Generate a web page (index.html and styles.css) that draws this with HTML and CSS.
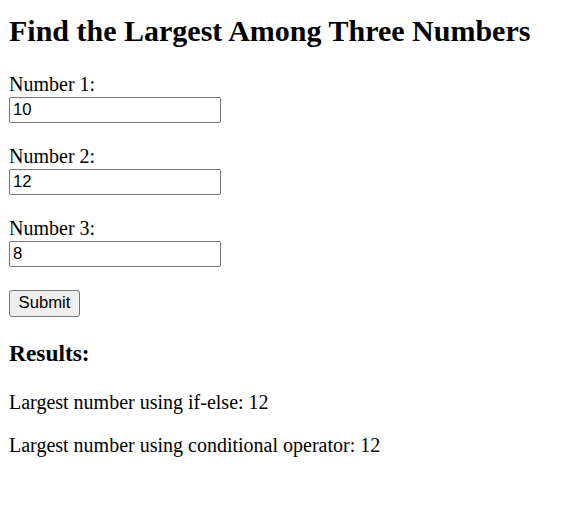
FILE: index.html
```html
<!DOCTYPE html>
<html>
<head>
<meta charset="utf-8">
<title>Largest Number</title>
<link rel="stylesheet" href="styles.css">
</head>
<body>
<h1 class="title">Find the Largest Among Three Numbers</h1>
<form class="form">
  <div class="group">
    <label class="label" for="n1">Number 1:</label>
    <input class="field" type="text" id="n1" value="10">
  </div>
  <div class="group">
    <label class="label" for="n2">Number 2:</label>
    <input class="field" type="text" id="n2" value="12">
  </div>
  <div class="group">
    <label class="label" for="n3">Number 3:</label>
    <input class="field" type="text" id="n3" value="8">
  </div>
  <button class="submit" type="button">Submit</button>
</form>
<h3 class="results-title">Results:</h3>
<p class="result">Largest number using if-else: 12</p>
<p class="result">Largest number using conditional operator: 12</p>
</body>
</html>
```

FILE: styles.css
```css
body {
  margin: 0 9px;
  font-family: "Liberation Serif", "Times New Roman", serif;
  font-size: 20px;
  color: #000;
  background: #fff;
}
.title {
  font-size: 30px;
  line-height: 34.5px;
  font-weight: bold;
  margin: 14px 0 24px;
}
.form {
  margin: 0;
  display: flex;
  flex-direction: column;
  align-items: flex-start;
}
.group {
  display: flex;
  flex-direction: column;
  align-items: flex-start;
  margin-bottom: 22px;
}
.group:nth-child(3) {
  margin-bottom: 23px;
}
.label {
  display: block;
  line-height: 23px;
}
.field {
  display: block;
  font-family: "Liberation Sans", Arial, sans-serif;
  font-size: 16.7px;
  width: 212px;
  height: 26px;
  box-sizing: border-box;
  padding: 1px 3px;
  margin: 1px 0 0;
  border: 1px solid #767676;
  border-radius: 2px;
  color: #000;
  background: #fff;
}
.submit {
  display: block;
  font-family: "Liberation Sans", Arial, sans-serif;
  font-size: 16.7px;
  height: 27px;
  width: 71px;
  box-sizing: border-box;
  padding: 0 6px;
  margin: 0;
  border: 1px solid #767676;
  border-radius: 3px;
  background: #efefef;
  color: #000;
}
.results-title {
  font-size: 23.4px;
  line-height: 27px;
  font-weight: bold;
  margin: 23px 0 24px;
}
.result {
  line-height: 23px;
  margin: 20.4px 0;
}
```
